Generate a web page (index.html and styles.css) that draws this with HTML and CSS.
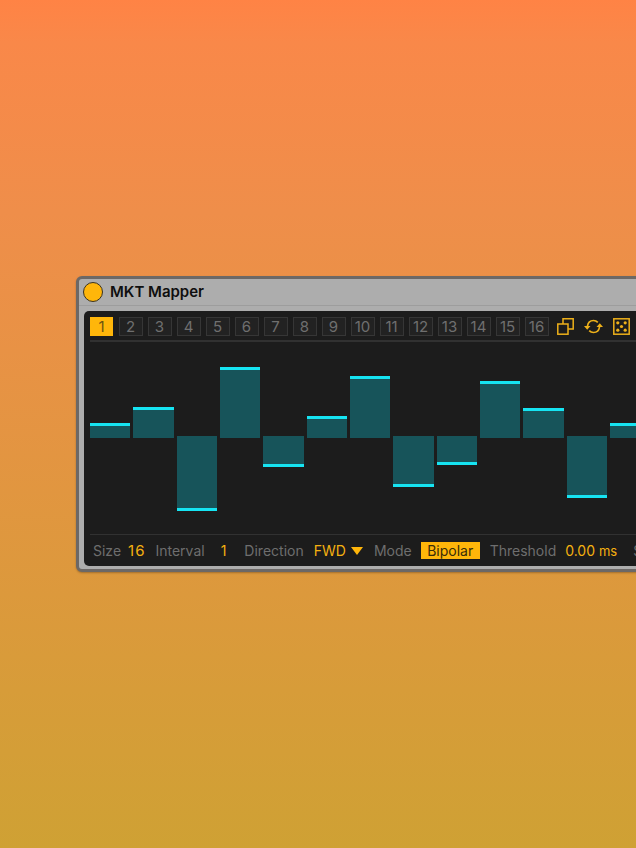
FILE: index.html
```html
<!DOCTYPE html>
<html lang="en">
<head>
    <meta charset="UTF-8">
    <title>MKT Mapper</title>
    <link rel="stylesheet" href="styles.css">
</head>
<body>
    <div class="device">
        <div class="titlebar">
            <span class="power"></span>
            <span class="title">MKT Mapper</span>
        </div>
        <div class="panel">
            <div class="toolbar">
                <button class="step active">1</button>
                <button class="step">2</button>
                <button class="step">3</button>
                <button class="step">4</button>
                <button class="step">5</button>
                <button class="step">6</button>
                <button class="step">7</button>
                <button class="step">8</button>
                <button class="step">9</button>
                <button class="step">10</button>
                <button class="step">11</button>
                <button class="step">12</button>
                <button class="step">13</button>
                <button class="step">14</button>
                <button class="step">15</button>
                <button class="step">16</button>
                <svg class="icon icon-copy" width="17" height="17" viewBox="0 0 17 17">
                    <path d="M6 6V.8h10.200V11H11" fill="none" stroke="#edb01a" stroke-width="1.500"/>
                    <rect x="0.800" y="6" width="10.200" height="10.200" fill="none" stroke="#edb01a" stroke-width="1.500"/>
                </svg>
                <svg class="icon icon-loop" width="19" height="17" viewBox="0 0 19 17">
                    <path d="M3.500 8C4 4.500 6.500 2.500 9.500 2.500c1.800 0 3.200 .7 4.300 1.800" fill="none" stroke="#edb01a" stroke-width="1.700"/>
                    <path d="M15.500 9c-.5 3.500-3 5.500-6 5.500-1.800 0-3.200-.7-4.300-1.800" fill="none" stroke="#edb01a" stroke-width="1.700"/>
                    <path d="M0 8h6.500L3.200 11.800zM12.500 9H19L15.800 5.200z" fill="#edb01a"/>
                </svg>
                <svg class="icon icon-dice" width="17" height="17" viewBox="0 0 17 17">
                    <rect x="0.800" y="0.800" width="15.400" height="15.400" fill="none" stroke="#edb01a" stroke-width="1.500"/>
                    <g fill="#edb01a">
                        <circle cx="4.800" cy="4.800" r="1.600"/>
                        <circle cx="12.200" cy="4.800" r="1.600"/>
                        <circle cx="8.500" cy="8.500" r="1.600"/>
                        <circle cx="4.800" cy="12.200" r="1.600"/>
                        <circle cx="12.200" cy="12.200" r="1.600"/>
                    </g>
                </svg>
            </div>
            <div class="graph">
                <div class="col"><div class="up"><div class="bar" style="height:15px"></div></div><div class="down"></div></div>
                <div class="col"><div class="up"><div class="bar" style="height:31px"></div></div><div class="down"></div></div>
                <div class="col"><div class="up"></div><div class="down"><div class="bar" style="height:75px"></div></div></div>
                <div class="col"><div class="up"><div class="bar" style="height:71px"></div></div><div class="down"></div></div>
                <div class="col"><div class="up"></div><div class="down"><div class="bar" style="height:31px"></div></div></div>
                <div class="col"><div class="up"><div class="bar" style="height:22px"></div></div><div class="down"></div></div>
                <div class="col"><div class="up"><div class="bar" style="height:62px"></div></div><div class="down"></div></div>
                <div class="col"><div class="up"></div><div class="down"><div class="bar" style="height:51px"></div></div></div>
                <div class="col"><div class="up"></div><div class="down"><div class="bar" style="height:29px"></div></div></div>
                <div class="col"><div class="up"><div class="bar" style="height:57px"></div></div><div class="down"></div></div>
                <div class="col"><div class="up"><div class="bar" style="height:30px"></div></div><div class="down"></div></div>
                <div class="col"><div class="up"></div><div class="down"><div class="bar" style="height:62px"></div></div></div>
                <div class="col"><div class="up"><div class="bar" style="height:15px"></div></div><div class="down"></div></div>
            </div>
            <div class="footer">
                <span class="label label-size">Size</span>
                <span class="value value-size">16</span>
                <span class="label label-interval">Interval</span>
                <span class="value value-interval">1</span>
                <span class="label label-direction">Direction</span>
                <span class="value value-fwd">FWD</span>
                <span class="arrow"></span>
                <span class="label label-mode">Mode</span>
                <span class="toggle">Bipolar</span>
                <span class="label label-threshold">Threshold</span>
                <span class="value value-threshold">0.00 <span class="unit">ms</span></span>
                <span class="label">S</span>
            </div>
        </div>
    </div>
</body>
</html>
```

FILE: styles.css
```css
html, body {
    height: 100%;
}
body {
    margin: 0;
    overflow: hidden;
    background: linear-gradient(180deg, #ff8345 0%, #f98849 5%, #ef8e4a 25%, #dc993c 70%, #cfa134 100%);
    font-family: Inter, "Liberation Sans", sans-serif;
}
.device {
    box-sizing: border-box;
    width: 640px;
    height: 296px;
    margin: 276px 0 0 76px;
    background: #adadad;
    border: 3px solid #6c6866;
    border-radius: 6px;
    box-shadow: 0 1px 2px rgba(80, 50, 20, 0.4);
}
.titlebar {
    display: flex;
    align-items: center;
    height: 26px;
    padding-left: 4px;
    border-bottom: 1px solid #9d9d9d;
}
.power {
    box-sizing: border-box;
    width: 20px;
    height: 20px;
    margin-right: 7px;
    background: #ffb60a;
    border: 1.500px solid #3a3320;
    border-radius: 50%;
}
.title {
    padding-bottom: 2px;
    font-size: 15px;
    font-weight: 600;
    color: #0f0f0f;
}
.panel {
    box-sizing: border-box;
    height: 255px;
    margin: 5px 0 0 5px;
    padding: 0 6px;
    background: #1c1c1c;
    border-radius: 5px;
}
.toolbar {
    display: flex;
    align-items: center;
    height: 31px;
    padding-top: 1px;
    box-sizing: border-box;
    border-bottom: 2px solid #313131;
    margin-right: -6px;
}
.step {
    box-sizing: border-box;
    flex: 0 0 24px;
    height: 19px;
    margin: 0 5px 0 0;
    padding: 0;
    background: #222;
    border: 1px solid #363636;
    color: #6f6f6f;
    font-family: inherit;
    font-size: 15px;
    line-height: 17px;
}
.step.active {
    flex-basis: 23px;
    background: #ffb60a;
    border-color: #ffb60a;
    color: #6a5310;
    margin-right: 5.500px;
}
.icon {
    flex: none;
}
.icon-copy {
    margin-left: 3.500px;
}
.icon-loop {
    margin-left: 10px;
}
.icon-dice {
    margin-left: 10px;
}
.graph {
    display: flex;
    gap: 3px;
    height: 193px;
    box-sizing: border-box;
    border-bottom: 1px solid #313131;
    margin-right: -6px;
}
.col {
    flex: 0 0 40.330px;
}
.up {
    display: flex;
    align-items: flex-end;
    height: 96px;
}
.down {
    margin-top: -2px;
}
.bar {
    box-sizing: border-box;
    width: 100%;
    background: #17545a;
}
.up .bar {
    border-top: 3px solid #16e4f2;
}
.down .bar {
    border-bottom: 3px solid #16e4f2;
}
.footer {
    display: flex;
    align-items: center;
    height: 31px;
    padding-left: 3px;
    font-size: 14px;
    white-space: nowrap;
}
.label {
    color: #6e6e6e;
}
.value {
    color: #f5b010;
}
.value-size {
    margin-left: 7px;
    font-size: 15px;
    letter-spacing: 1px;
}
.label-interval {
    margin-left: 10px;
}
.value-interval {
    margin-left: 16px;
}
.label-direction {
    margin-left: 18px;
}
.value-fwd {
    margin-left: 10px;
}
.arrow {
    width: 0;
    height: 0;
    margin-left: 5px;
    border-left: 6px solid transparent;
    border-right: 6px solid transparent;
    border-top: 8px solid #ffb60a;
}
.label-mode {
    margin-left: 11px;
}
.toggle {
    box-sizing: border-box;
    width: 59px;
    height: 17px;
    margin-left: 9px;
    background: #ffb60a;
    color: #3a2d08;
    text-align: center;
    line-height: 17px;
}
.label-threshold {
    margin-left: 10px;
}
.value-threshold {
    margin-left: 9px;
    margin-right: 16px;
}
.unit {
    font-size: 13px;
}
```
